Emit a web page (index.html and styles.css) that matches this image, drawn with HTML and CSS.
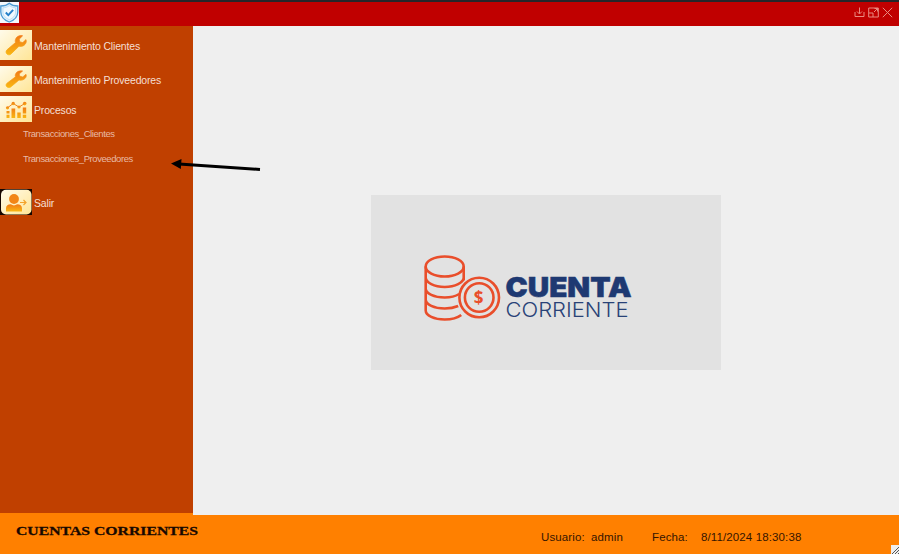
FILE: index.html
```
<!DOCTYPE html>
<html lang="es">
<head>
<meta charset="utf-8">
<title>Cuentas Corrientes</title>
<link rel="stylesheet" href="styles.css">
</head>
<body>
<svg class="defs" width="0" height="0" aria-hidden="true">
  <defs>
    <linearGradient id="tile" x1="0" y1="0" x2="1" y2="1"><stop offset="0" stop-color="#fffbea"/><stop offset="1" stop-color="#ffe596"/></linearGradient>
    <linearGradient id="amber" x1="0" y1="0" x2="0" y2="1"><stop offset="0" stop-color="#f17a16"/><stop offset="1" stop-color="#f9b712"/></linearGradient>
    <symbol id="wrench" viewBox="0 0 32 30" preserveAspectRatio="none">
      <path fill="url(#tile)" d="M0 0h32v30H0z"/>
      <path fill="url(#amber)" stroke="url(#amber)" stroke-width=".7" d="M22.600 5.800c-2.500-.7-5.200.2-6.600 2.500-.9 1.500-1 3.100-.5 4.200L7 19.800c-1.300 1.300-1.300 3.200 0 4.300 1.200 1.100 2.900 1 4.100-.2l7.900-7.700c2.300.7 4.700-.1 6.200-2 1.200-1.500 1.300-3.100.8-4.600l-3.200 3-2.900-.7-.7-2.700z"/>
    </symbol>
  </defs>
</svg>
<div class="window">
  <header class="titlebar">
    <svg class="shield" viewBox="0 0 19 21">
      <path fill="#f4f9fd" d="M0 0h19v21H0z"/>
      <path fill="#e0f1fc" stroke="#4c9bd3" stroke-width="1.300" d="M9.300 1.300C7 3.300 4 4 .8 4v6c0 4.700 3.700 8.200 8.500 10 4.800-1.800 8.500-5.300 8.500-10V4c-3.200 0-6.200-.7-8.500-2.700z"/>
      <path fill="#f1f9fe" stroke="#a9d4f0" stroke-width=".7" d="M9.300 3.700C7.300 5 5.500 5.700 3 5.800v4.400c0 3.400 2.700 6 6.300 7.500 3.600-1.500 6.300-4.100 6.300-7.500V5.800C13.100 5.700 11.300 5 9.300 3.700z"/>
      <path fill="none" stroke="#2680c9" stroke-width="1.900" d="M5.800 10.500l2.500 2.700 4.800-5.400"/>
    </svg>
    <div class="controls">
      <svg viewBox="0 0 11 11"><path d="M5.500 .5v6M3 4.500L5.500 7 8 4.500M1 5v4.500h9V5"/></svg>
      <svg viewBox="0 0 11 11"><path d="M.7 1h9.600v9H.7zM1 6h4v4M6 5l3.500-3.500M6.500 1.500h3v3"/></svg>
      <svg viewBox="0 0 11 11"><path d="M.8.800l9.400 9.400M10.200.800L.8 10.200"/></svg>
    </div>
  </header>
  <div class="workspace">
    <nav class="sidebar">
      <a class="item tall"><svg><use href="#wrench"/></svg><span>Mantenimiento Clientes</span></a>
      <a class="item second"><svg><use href="#wrench"/></svg><span>Mantenimiento Proveedores</span></a>
      <a class="item"><svg viewBox="0 0 32 26"><path fill="url(#tile)" d="M0 0h32v26H0z"/><g fill="url(#amber)"><path d="M6.500 15h3v2.500h-3zM6.500 18.800h3V22h-3zM11.500 12.500h3.700V22h-3.700zM17.300 16.500h3.400V22h-3.400zM22.800 11.500h3.400v6h-3.400zM22.800 18.700h3.400V22h-3.400z"/><circle cx="7.500" cy="11.800" r="1.600"/><circle cx="13.200" cy="7.500" r="1.700"/><circle cx="19" cy="11" r="1.600"/><circle cx="24.700" cy="7.600" r="1.800"/></g><path fill="none" stroke="#ee871e" d="M7.500 11.800l5.700-4.300L19 11l5.700-3.400"/></svg><span>Procesos</span></a>
      <div class="submenu"><a>Transacciones_Clientes</a><a>Transacciones_Proveedores</a></div>
      <a class="item"><svg viewBox="0 0 32 26"><path fill="#160600" d="M0 0h32v26H0z"/><rect x="1" y=".8" width="30.500" height="24.700" rx="5" fill="url(#tile)"/><circle cx="14" cy="10" r="4.900" fill="#f28516"/><path fill="url(#amber)" d="M6 22.500v-3.200c0-2.800 2-4 4.800-4 2 1.500 4.400 1.500 6.400 0 2.800 0 4.800 1.200 4.800 4v3.200z"/><path fill="none" stroke="#f4a32b" stroke-width="1.200" d="M20 13.500h6M23.500 11l2.500 2.500-2.500 2.500"/></svg><span>Salir</span></a>
    </nav>
    <main class="content">
      <section class="banner">
        <svg viewBox="0 0 350 175" width="350" height="175">
          <g fill="none" stroke="#e94e2b" stroke-width="2.600">
            <ellipse cx="73.700" cy="71.500" rx="19" ry="10"/>
            <path d="M54.700 71.500v44c0 5 8.500 9 19 9 7 0 13-1.700 16.500-4.500M92.700 71.500v14M54.700 82.500c0 5 8.500 9.500 19 9.500s19-4.500 19-9.500M54.700 93.500c0 5 8.500 9 19 9 6 0 11-1.300 14.500-3.500M54.700 104.500c0 5 8.500 9 19 9 5 0 10-1 13.500-2.500"/>
            <circle cx="108.200" cy="102.500" r="19.800"/><circle cx="108.200" cy="102.500" r="14.300"/>
          </g>
          <text class="coin" x="107.700" y="108.500">$</text>
          <text class="brand" x="134.500" y="102.300" textLength="126" lengthAdjust="spacingAndGlyphs">CUENTA</text>
          <text class="brand-sub" x="134.500" y="122" textLength="123" lengthAdjust="spacingAndGlyphs">CORRIENTE</text>
        </svg>
      </section>
    </main>
  </div>
  <footer class="statusbar">
    <svg class="app-name" width="190" height="24"><text x="0" y="15" textLength="182" lengthAdjust="spacingAndGlyphs">CUENTAS CORRIENTES</text></svg>
    <div class="status"><span class="user-label">Usuario:</span><span class="user">admin</span><span class="date-label">Fecha:</span><time>8/11/2024 18:30:38</time></div>
    <svg class="grip" viewBox="0 0 8 9"><path fill="#eee" d="M0 0h8v9H0z"/><path stroke="#555" stroke-width="1" d="M1 9l7-7M4 9l4-4M7 9l1-1"/></svg>
  </footer>
  <svg class="arrow" viewBox="0 0 94 20"><path fill="none" stroke="#000" stroke-width="3" d="M9 9l81 5.500"/><path d="M1 8.500L11.500 4l-.7 10z"/></svg>
</div>
</body>
</html>
```

FILE: styles.css
```
* { box-sizing: border-box; }
body { margin: 0; font-family: "Liberation Sans", Arial, sans-serif; }
.defs { position: absolute; }
.window { position: relative; display: flex; flex-direction: column; width: 899px; height: 554px; overflow: hidden; background: #ff8000; }
.titlebar { display: flex; justify-content: space-between; height: 26px; border-top: 2px solid #25262a; background: #c00000; }
.shield { width: 19px; height: 21px; }
.controls { display: flex; gap: 3px; padding: 5px 6px 0 0; }
.controls svg { width: 11px; height: 11px; fill: none; stroke: #e98a80; stroke-width: 1; }
.workspace { display: flex; height: 489px; }
.sidebar { width: 193px; height: 487px; padding-top: 4px; background: #c04000; }
.item { display: flex; align-items: center; gap: 2px; height: 26px; color: #f5dfd3; font-size: 10.5px; letter-spacing: -.17px; white-space: nowrap; }
.item span { padding-top: 1px; }
.item svg { flex: none; width: 32px; height: 100%; }
.item.tall { height: 30px; }
.item.second { margin: 6px 0 4px; }
.submenu { display: flex; flex-direction: column; gap: 13px; height: 67px; padding: 6px 0 0 23px; color: #e8baa5; font-size: 9.500px; letter-spacing: -.43px; line-height: 12px; }
.content { flex: 1; display: flex; align-items: flex-start; padding: 169px 0 0 178px; background: #efefef; }
.banner { width: 350px; height: 175px; background: #e2e2e2; }
.banner svg { display: block; }
.coin { font: bold 17px "Open Sans", sans-serif; fill: #e94e2b; text-anchor: middle; }
.brand { font: 900 27.500px Inter, sans-serif; fill: #1e3972; stroke: #1e3972; stroke-width: .5px; }
.brand-sub { font: 300 20.500px Inter, sans-serif; fill: #294277; }
.statusbar { position: relative; display: flex; height: 39px; padding-left: 16px; color: #351500; }
.app-name { margin-top: 5px; }
.app-name text { font: bold 13.500px "Liberation Serif", serif; fill: #180800; stroke: #180800; stroke-width: .3px; }
.status { display: flex; align-items: flex-start; padding-top: 15px; margin-left: 335px; font-size: 11.500px; letter-spacing: .12px; line-height: 14px; white-space: nowrap; }
.user-label { width: 50px; }
.user { width: 61px; }
.date-label { width: 49px; }
.grip { position: absolute; right: 0; bottom: 0; width: 8px; height: 9px; }
.arrow { position: absolute; left: 170px; top: 155px; width: 94px; height: 20px; }
```
